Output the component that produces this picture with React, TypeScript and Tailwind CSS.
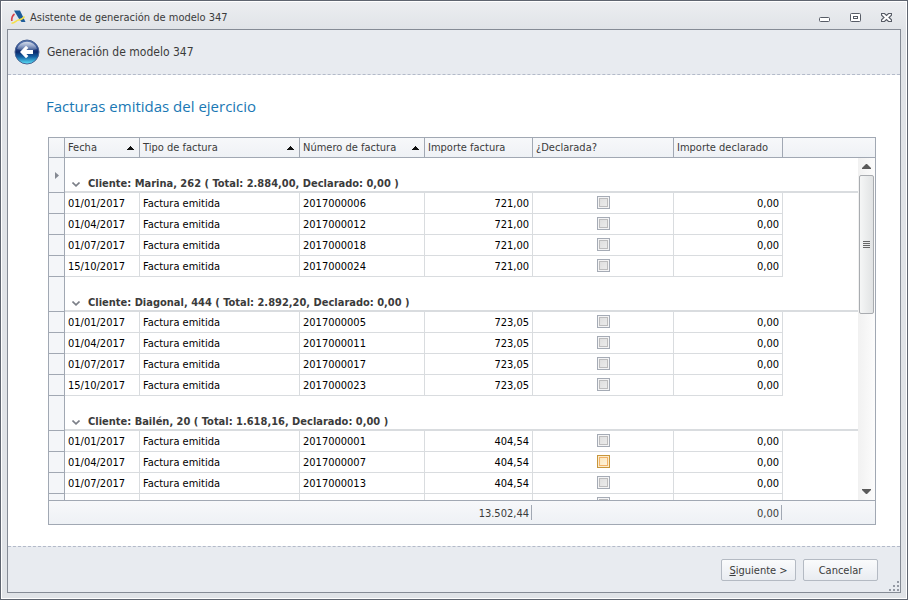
import React from "react";

type Row = { date: string; number: string; amount: string; hot?: boolean };
type Group = { title: string; rows: Row[]; current?: boolean };

const groups: Group[] = [
  {
    title: "Cliente: Marina, 262 ( Total: 2.884,00, Declarado: 0,00 )",
    current: true,
    rows: [
      { date: "01/01/2017", number: "2017000006", amount: "721,00" },
      { date: "01/04/2017", number: "2017000012", amount: "721,00" },
      { date: "01/07/2017", number: "2017000018", amount: "721,00" },
      { date: "15/10/2017", number: "2017000024", amount: "721,00" },
    ],
  },
  {
    title: "Cliente: Diagonal, 444 ( Total: 2.892,20, Declarado: 0,00 )",
    rows: [
      { date: "01/01/2017", number: "2017000005", amount: "723,05" },
      { date: "01/04/2017", number: "2017000011", amount: "723,05" },
      { date: "01/07/2017", number: "2017000017", amount: "723,05" },
      { date: "15/10/2017", number: "2017000023", amount: "723,05" },
    ],
  },
  {
    title: "Cliente: Bailén, 20 ( Total: 1.618,16, Declarado: 0,00 )",
    rows: [
      { date: "01/01/2017", number: "2017000001", amount: "404,54" },
      { date: "01/04/2017", number: "2017000007", amount: "404,54", hot: true },
      { date: "01/07/2017", number: "2017000013", amount: "404,54" },
      { date: "15/10/2017", number: "2017000019", amount: "404,54" },
    ],
  },
];

const Columns = () => (
  <colgroup>
    <col className="w-[16px]" />
    <col className="w-[75px]" />
    <col className="w-[160px]" />
    <col className="w-[125px]" />
    <col className="w-[108px]" />
    <col className="w-[141px]" />
    <col className="w-[109px]" />
    <col />
  </colgroup>
);

const tableClass = "w-full table-fixed border-separate border-spacing-0";

function HeadCell({ label, sorted }: { label: string; sorted?: boolean }) {
  return (
    <th className="h-5 border-r border-b border-[#a1a8b3] p-0 text-left font-normal">
      <div className="flex items-center justify-between pr-[5px] pl-[3px]">
        <span className="whitespace-nowrap">{label}</span>
        {sorted && (
          <svg width="7" height="4" viewBox="0 0 7 4" shapeRendering="crispEdges" aria-hidden="true">
            <path d="M3 0h1v1h1v1h1v1h1v1H0V3h1V2h1V1h1z" fill="#111" />
          </svg>
        )}
      </div>
    </th>
  );
}

function Check({ hot, label }: { hot?: boolean; label: string }) {
  return (
    <input
      type="checkbox"
      aria-label={label}
      className={
        hot
          ? "mt-[3px] ml-16 block size-[13px] appearance-none border border-[#c8963c] bg-[#fdf0d2] bg-linear-to-br from-[#fbe3b4] to-[#fef6e4] shadow-[inset_0_0_0_1px_#fbeccb,inset_0_0_0_2px_#f2b268]"
          : "mt-[3px] ml-16 block size-[13px] appearance-none border border-[#a5abb5] bg-linear-to-br from-[#dcdcdc] to-[#eeeeee] shadow-[inset_0_0_0_1px_#f4f4f5,inset_0_0_0_2px_#bcbcbd]"
      }
    />
  );
}

const cell = "h-[21px] border-r border-b border-[#d9dcdf] px-[3px] pt-0.5 pb-0 leading-[18px] whitespace-nowrap";
const indicator = "border-r border-b border-[#a1a8b3] bg-[#f4f6f9] p-0";

function GroupBody({ group }: { group: Group }) {
  return (
    <tbody>
      <tr>
        <td className={indicator}>
          {group.current && (
            <svg className="ml-[6px] block" width="4" height="7" viewBox="0 0 4 7" aria-hidden="true">
              <path d="M0 0L4 3.500L0 7z" fill="#858a93" />
            </svg>
          )}
        </td>
        <th colSpan={7} className="h-[35px] border-b-2 border-[#d9dcdf] p-0 align-bottom">
          <div className="flex h-[14px] items-center gap-2 pl-[7px] leading-[14px] text-[#3b3b3b]">
            <button type="button" aria-label="Contraer grupo" className="w-2">
              <svg className="block" width="8" height="5" viewBox="0 0 8 5" aria-hidden="true">
                <path d="M0.500 0.500L4 3.800L7.500 0.500" fill="none" stroke="#7b7f87" strokeWidth="1.600" />
              </svg>
            </button>
            <span className="text-left font-bold whitespace-nowrap">{group.title}</span>
          </div>
        </th>
      </tr>
      {group.rows.map((row) => (
        <tr key={row.number}>
          <td className={indicator}></td>
          <td className={cell}>{row.date}</td>
          <td className={cell}>Factura emitida</td>
          <td className={cell}>{row.number}</td>
          <td className={`${cell} text-right`}>{row.amount}</td>
          <td className="h-[21px] border-r border-b border-[#d9dcdf] p-0 align-top">
            <Check hot={row.hot} label={`Declarada ${row.number}`} />
          </td>
          <td className={`${cell} text-right`}>0,00</td>
          <td className="p-0"></td>
        </tr>
      ))}
    </tbody>
  );
}

function ScrollBar() {
  return (
    <div className="flex w-[17px] shrink-0 flex-col items-center bg-linear-to-r from-[#f1f1f1] to-[#fcfcfc]">
      <button type="button" aria-label="Subir" className="flex h-[17px] w-full items-center justify-center">
        <svg width="9" height="5" viewBox="0 0 9 5" aria-hidden="true">
          <path d="M4 0h1l4 4v1H0V4z" fill="#5a5a5a" />
        </svg>
      </button>
      <div className="flex h-[139px] w-[15px] flex-col items-center justify-center gap-px rounded-xs border border-[#a9acb0] bg-linear-to-r from-[#f5f6f6] to-[#e1e3e4]">
        <span className="h-px w-[7px] bg-[#666]" />
        <span className="h-px w-[7px] bg-[#666]" />
        <span className="h-px w-[7px] bg-[#666]" />
        <span className="h-px w-[7px] bg-[#666]" />
      </div>
      <button type="button" aria-label="Bajar" className="mt-auto flex h-[17px] w-full items-center justify-center">
        <svg width="9" height="5" viewBox="0 0 9 5" aria-hidden="true">
          <path d="M4 5h1l4-4V0H0v1z" fill="#5a5a5a" />
        </svg>
      </button>
    </div>
  );
}

const total = "mr-px h-[15px] border-r border-[#a1a8b3] pt-px pr-[2px] text-right leading-[15px]";

function Grid() {
  return (
    <div className="flex min-h-0 flex-1 flex-col border border-[#a1a8b3] text-black">
      <table className={`${tableClass} bg-linear-to-b from-[#f7f8fa] to-[#eef1f5] text-[#3b3b3b]`}>
        <Columns />
        <thead>
          <tr>
            <th className="h-5 border-r border-b border-[#a1a8b3] p-0"></th>
            <HeadCell label="Fecha" sorted />
            <HeadCell label="Tipo de factura" sorted />
            <HeadCell label="Número de factura" sorted />
            <HeadCell label="Importe factura" />
            <HeadCell label="¿Declarada?" />
            <HeadCell label="Importe declarado" />
            <th className="h-5 border-b border-[#a1a8b3] p-0"></th>
          </tr>
        </thead>
      </table>
      <div className="flex min-h-0 flex-1">
        <div className="min-w-0 flex-1 overflow-hidden">
          <table className={tableClass}>
            <Columns />
            {groups.map((g) => (
              <GroupBody key={g.title} group={g} />
            ))}
          </table>
        </div>
        <ScrollBar />
      </div>
      <table className={`${tableClass} border-t border-[#a1a8b3] bg-linear-to-b from-[#f7f8fa] to-[#eef1f5] text-[#3b3b3b]`}>
        <Columns />
        <tfoot>
          <tr>
            <td colSpan={4} className="h-[23px] p-0"></td>
            <td className="p-0">
              <div className={total}>13.502,44</div>
            </td>
            <td className="p-0"></td>
            <td className="p-0">
              <div className={total}>0,00</div>
            </td>
            <td className="p-0"></td>
          </tr>
        </tfoot>
      </table>
    </div>
  );
}

function AgencyLogo() {
  return (
    <svg width="16" height="16" viewBox="0 0 16 16" aria-hidden="true">
      <path d="M4 1.500h6L15.500 13h-4L8.500 9z" fill="#1d5c99" />
      <path d="M4.500 5C2.500 6.500 1.500 9 1.800 12" fill="none" stroke="#d8434a" strokeWidth="1.600" />
      <path d="M1.500 14.300C5.500 14.300 6 11 8.500 11c2.800 0 4-1 6-3.500" fill="none" stroke="#f4e04a" strokeWidth="1.500" />
    </svg>
  );
}

function BackIcon() {
  return (
    <svg className="block" width="26" height="26" viewBox="0 0 26 26" aria-hidden="true">
      <defs>
        <linearGradient id="orb" x1="0" y1="0" x2="0" y2="1">
          <stop offset="0" stopColor="#5b78ad" />
          <stop offset="0.250" stopColor="#3a5a9c" />
          <stop offset="0.500" stopColor="#0c2a6c" />
          <stop offset="0.700" stopColor="#1462a4" />
          <stop offset="1" stopColor="#5ee6fb" />
        </linearGradient>
        <linearGradient id="gloss" x1="0" y1="0" x2="0" y2="1">
          <stop offset="0" stopColor="#fff" stopOpacity="0.750" />
          <stop offset="1" stopColor="#fff" stopOpacity="0.100" />
        </linearGradient>
      </defs>
      <circle cx="13" cy="13" r="12" fill="url(#orb)" stroke="#4a6292" strokeWidth="1" />
      <path d="M3 10a10.200 9 0 0 1 20 0q-10 4-20 0z" fill="url(#gloss)" />
      <path d="M6 13l6-6.300 2.400 2.200-2 2.200H19v3.800h-6.600l2 2.200-2.400 2.200z" fill="#fff" />
    </svg>
  );
}

function WindowButtons() {
  return (
    <div className="flex items-center gap-[20px]">
      <button type="button" aria-label="Minimizar">
        <svg className="block" width="11" height="11" viewBox="0 0 11 11" aria-hidden="true">
          <rect x="0.500" y="5.500" width="10" height="4" rx="1" fill="#fff" stroke="#575c66" />
        </svg>
      </button>
      <button type="button" aria-label="Maximizar">
        <svg className="block" width="11" height="11" viewBox="0 0 11 11" aria-hidden="true">
          <rect x="0.500" y="1.500" width="10" height="8" rx="1" fill="#fff" stroke="#575c66" />
          <rect x="3.500" y="4.500" width="4" height="2" fill="#fff" stroke="#575c66" />
        </svg>
      </button>
      <button type="button" aria-label="Cerrar">
        <svg className="block" width="11" height="11" viewBox="0 0 11 11" aria-hidden="true">
          <path
            d="M0.500 1.500h3l2 2 2-2h3v1.700L8 5.500l2.500 2.300v1.700h-3l-2-2-2 2h-3V7.800L3 5.500 0.500 3.200z"
            fill="#fff"
            stroke="#575c66"
            strokeWidth="1.200"
          />
        </svg>
      </button>
    </div>
  );
}

const footButton =
  "h-[22px] w-[75px] rounded-xs border border-[#b4bac3] bg-linear-to-b from-[#fafbfc] to-[#e9ecf1] pt-0.5 text-center";

export default function App() {
  return (
    <div className="flex h-screen flex-col border border-[#5f6570] bg-[#e3e6ea] bg-linear-to-b from-[#eceef1] to-[#e0e3e7] to-[30px] font-['DejaVu_Sans_Condensed','DejaVu_Sans',sans-serif] text-[11px] leading-4 text-[#3b3b3b]">
      <div className="flex min-h-0 flex-1 flex-col border border-white px-[5px] pb-[5px]">
        <header className="flex h-[27px] shrink-0 items-center justify-between pt-[3px] pr-[9px] pl-[3px]">
          <div className="flex items-center gap-1">
            <AgencyLogo />
            <h1 className="pt-0.5">Asistente de generación de modelo 347</h1>
          </div>
          <WindowButtons />
        </header>
        <main className="flex min-h-0 flex-1 flex-col border border-[#858b95] bg-white">
          <div className="flex h-[45px] shrink-0 items-center gap-[7px] border-b border-dashed border-[#b3bac9] bg-[#e8ebf0] pl-[6px] text-[12px]">
            <button type="button" aria-label="Atrás">
              <BackIcon />
            </button>
            <span>Generación de modelo 347</span>
          </div>
          <section className="flex min-h-0 flex-1 flex-col pt-[19px] pr-6 pb-[21px] pl-10">
            <h2 className="-ml-0.5 mb-[19px] font-[Open_Sans,sans-serif] text-[15px] leading-6 text-[#1a78b4]">
              Facturas emitidas del ejercicio
            </h2>
            <Grid />
          </section>
          <footer className="flex h-[46px] shrink-0 justify-end gap-[7px] border-t border-dashed border-[#b3bac9] bg-[#e8ebf0] pt-3">
            <button type="button" className={footButton}>
              <span className="underline">S</span>iguiente &gt;
            </button>
            <button type="button" className={footButton}>
              Cancelar
            </button>
            <svg className="mt-auto ml-[3px] mr-px mb-px" width="11" height="11" viewBox="0 0 11 11" fill="#9499a3" aria-hidden="true">
              <path d="M9 1h2v2H9zM9 5h2v2H9zM5 5h2v2H5zM9 9h2v2H9zM5 9h2v2H5zM1 9h2v2H1z" />
            </svg>
          </footer>
        </main>
      </div>
    </div>
  );
}
